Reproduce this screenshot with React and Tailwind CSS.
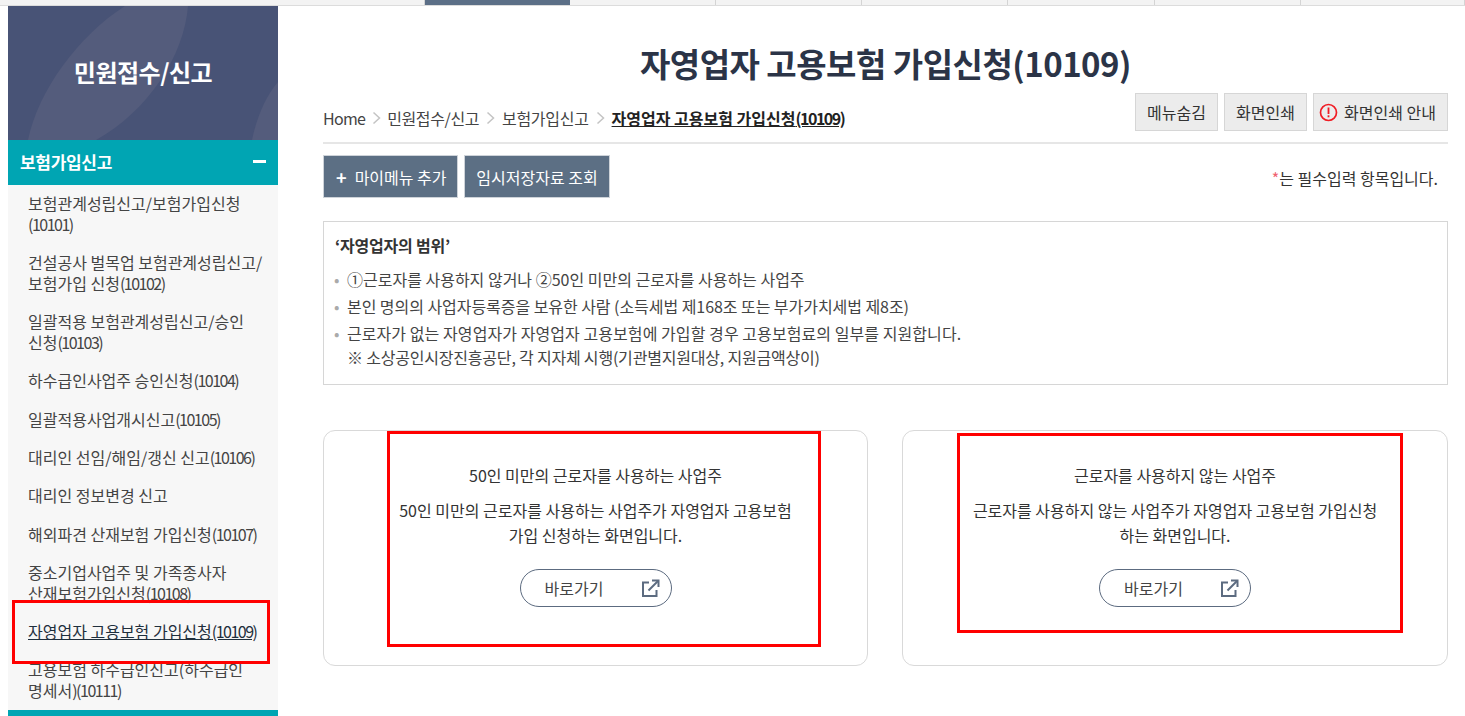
// App.jsx
import React from 'react';

const FONT = "font-['Noto_Sans_CJK_KR','Noto_Sans',sans-serif]";

const menuItems = [
  ['보험관계성립신고/보험가입신청', '(10101)'],
  ['건설공사 벌목업 보험관계성립신고/', '보험가입 신청(10102)'],
  ['일괄적용 보험관계성립신고/승인', '신청(10103)'],
  ['하수급인사업주 승인신청(10104)'],
  ['일괄적용사업개시신고(10105)'],
  ['대리인 선임/해임/갱신 신고(10106)'],
  ['대리인 정보변경 신고'],
  ['해외파견 산재보험 가입신청(10107)'],
  ['중소기업사업주 및 가족종사자', '산재보험가입신청(10108)'],
  ['자영업자 고용보험 가입신청(10109)'],
  ['고용보험 하수급인신고(하수급인', '명세서)(10111)'],
];

// digits sit tighter than the hangul in the reference
const Tight = ({ text }) =>
  text.split(/(\(?[0-9]+\)|\([0-9]+|\))/).map((part, i) =>
    i % 2 ? <span key={i} className="tracking-[-1.5px]">{part}</span> : part
  );

const Chevron = () => (
  <svg width="9" height="14" viewBox="0 0 9 14" fill="none" stroke="#c4c4c4" strokeWidth="1.5" className="mx-[7px]">
    <path d="M1.5 1.5 7.5 7 1.5 12.5" />
  </svg>
);

const LinkIcon = () => (
  <svg width="19" height="19" viewBox="0 0 19 19" fill="none" stroke="#5c6b80" strokeWidth="2">
    <path d="M8 3.5H2V17h13.5v-6" />
    <path d="M7.5 11.5 17 2" />
    <path d="M11 1.5h6.5V8" />
  </svg>
);

const ChoiceCard = ({ title, lines, className }) => (
  <div className={`h-[236px] border border-[#d9d9d9] rounded-xl flex flex-col items-center pt-[31px] ${className}`}>
    <p className="text-[16px] leading-[26px] text-[#333]">{title}</p>
    <div className="mt-[10px] text-[16px] leading-[25px] text-[#333] text-center">
      {lines.map(l => <p key={l}>{l}</p>)}
    </div>
    <button className="mt-[21px] w-[152px] h-[38px] border border-[#5c6b80] rounded-full flex items-center justify-between pl-[24px] pr-[11px] text-[16px] text-[#444]">
      바로가기
      <LinkIcon />
    </button>
  </div>
);

const GrayButton = ({ children }) => (
  <button className="h-[38px] w-[83px] flex items-center justify-center bg-[#ececec] border border-[#d6d6d6] text-[16px] text-[#333]">
    {children}
  </button>
);

const App = () => {
  return (
    <div className={`relative w-[1465px] h-[716px] overflow-hidden bg-white ${FONT}`}>
      {/* top tab strip */}
      <div className="h-[6px] bg-[#f3f3f3] border-b border-[#dcdcdc] flex pl-[278px]">
        {[147, 145, 146, 146, 146, 147, 146, 164].map((w, i) => (
          <div key={i} style={{ width: w }} className={i === 1 ? 'bg-[#5c6f87]' : 'border-r border-[#d4d4d4]'} />
        ))}
      </div>

      <div className="flex pl-[8px]">
        {/* sidebar */}
        <aside className="w-[270px] shrink-0 bg-[#f7f7f7]">
          <div className="relative h-[134px] pb-[2px] bg-[#485376] flex items-center justify-center overflow-hidden">
            <svg className="absolute inset-0" width="270" height="134" viewBox="0 0 270 134">
              <path d="M117 0H180C176 50 140 105 88 134H20C30 85 70 30 117 0Z" fill="#545c7c" />
              <path d="M270 76V134H244C249 110 258 90 270 76Z" fill="#545c7c" />
            </svg>
            <h2 className="relative text-[24px] font-bold tracking-[-0.5px] text-white">민원접수/신고</h2>
          </div>
          <div className="h-[45px] pb-[2px] bg-[#00a5b3] flex items-center justify-between pl-[12px] pr-[12px] text-white">
            <span className="text-[17px] font-bold tracking-[-0.3px]">보험가입신고</span>
            <span className="w-[13px] h-[3px] bg-white" />
          </div>
          <ul className="-mt-px">
            {menuItems.map(lines => {
              const active = lines[0].startsWith('자영업자');
              return (
                <li key={lines[0]} className={`py-[8.65px] pl-[20px] text-[16px] leading-[21px] ${active ? 'underline text-[#1f2f3d]' : 'text-[#444]'}`}>
                  {lines.map(l => <div key={l}><Tight text={l} /></div>)}
                </li>
              );
            })}
          </ul>
          <div className="h-[6px] bg-[#00a5b3]" />
        </aside>

        {/* content */}
        <main className="w-[1125px] ml-[45px]">
          <h1 className="mt-[34px] text-center text-[33px] leading-[46px] font-bold tracking-[-0.5px] text-[#2b3447]">
            자영업자 고용보험 가입신청(10109)
          </h1>

          <div className="mt-[7px] h-[51px] flex items-start justify-between border-b-2 border-[#e6e6e6]">
            <div className="flex items-center h-[40px] text-[16px] text-[#444] pt-[10px]">
              <span className="tracking-[-0.7px]">Home</span>
              <Chevron />
              <span className="-ml-[1px] tracking-[-0.4px]">민원접수/신고</span>
              <Chevron />
              <span className="tracking-[-0.3px]">보험가입신고</span>
              <Chevron />
              <span className="font-bold underline text-[#222]"><Tight text="자영업자 고용보험 가입신청(10109)" /></span>
            </div>
            <div className="flex gap-[6px]">
              <GrayButton>메뉴숨김</GrayButton>
              <GrayButton>화면인쇄</GrayButton>
              <button className="h-[38px] w-[135px] pl-[5px] flex items-center gap-[6px] bg-[#ececec] border border-[#d6d6d6] text-[16px] text-[#333]">
                <svg width="19" height="19" viewBox="0 0 19 19" fill="none">
                  <circle cx="9.5" cy="9.5" r="8" stroke="#f01c24" strokeWidth="1.7" />
                  <rect x="8.6" y="4.5" width="1.8" height="6.5" fill="#f01c24" />
                  <rect x="8.6" y="12.3" width="1.8" height="2" fill="#f01c24" />
                </svg>
                화면인쇄 안내
              </button>
            </div>
          </div>

          <div className="mt-[11px] flex items-center justify-between">
            <div className="flex gap-[6px]">
              <button className="h-[43px] w-[135px] pl-[12px] flex items-center gap-[8px] bg-[#5c6f84] border border-[#ced3d9] text-[16px] text-white">
                <span className="text-[18px] font-bold leading-none">+</span>
                마이메뉴 추가
              </button>
              <button className="h-[43px] w-[146px] bg-[#5c6f84] border border-[#ced3d9] text-[16px] text-white">
                임시저장자료 조회
              </button>
            </div>
            <p className="pr-[10px] pt-[3px] text-[16px] text-[#333]">
              <span className="text-[#f0626e]">*</span>는 필수입력 항목입니다.
            </p>
          </div>

          <section className="mt-[23px] h-[164px] border border-[#d6d6d6] pl-[10px] pt-[12px]">
            <h3 className="ml-[1px] text-[16px] leading-[22px] font-bold tracking-[-0.2px] text-[#333]">‘자영업자의 범위’</h3>
            <ul className="mt-[13px] text-[16px] leading-[21px] text-[#444]">
              <li className="flex mb-[6px]"><span className="w-[13px] text-[#aaa]">•</span>①근로자를 사용하지 않거나 ②50인 미만의 근로자를 사용하는 사업주</li>
              <li className="flex mb-[6px]"><span className="w-[13px] text-[#aaa]">•</span><span className="tracking-[-0.05px]">본인 명의의 사업자등록증을 보유한 사람 (소득세법 제168조 또는 부가가치세법 제8조)</span></li>
              <li className="flex">
                <span className="w-[13px] text-[#aaa]">•</span>
                <div>
                  <p className="tracking-[0.07px]">근로자가 없는 자영업자가 자영업자 고용보험에 가입할 경우 고용보험료의 일부를 지원합니다.</p>
                  <p className="mt-[3px] tracking-[-0.2px]">※ 소상공인시장진흥공단, 각 지자체 시행(기관별지원대상, 지원금액상이)</p>
                </div>
              </li>
            </ul>
          </section>

          <div className="mt-[45px] flex gap-[34px]">
            <ChoiceCard
              className="w-[545px]"
              title="50인 미만의 근로자를 사용하는 사업주"
              lines={['50인 미만의 근로자를 사용하는 사업주가 자영업자 고용보험', '가입 신청하는 화면입니다.']}
            />
            <ChoiceCard
              className="flex-1"
              title="근로자를 사용하지 않는 사업주"
              lines={['근로자를 사용하지 않는 사업주가 자영업자 고용보험 가입신청', '하는 화면입니다.']}
            />
          </div>
        </main>
      </div>

      {/* red annotation boxes drawn over the page */}
      <div className="absolute left-[12px] top-[600px] w-[258px] h-[64px] border-[3px] border-[#ff0000]" />
      <div className="absolute left-[387px] top-[431px] w-[434px] h-[216px] border-[3px] border-[#ff0000]" />
      <div className="absolute left-[957px] top-[433px] w-[446px] h-[200px] border-[3px] border-[#ff0000]" />
    </div>
  );
};

export default App;
